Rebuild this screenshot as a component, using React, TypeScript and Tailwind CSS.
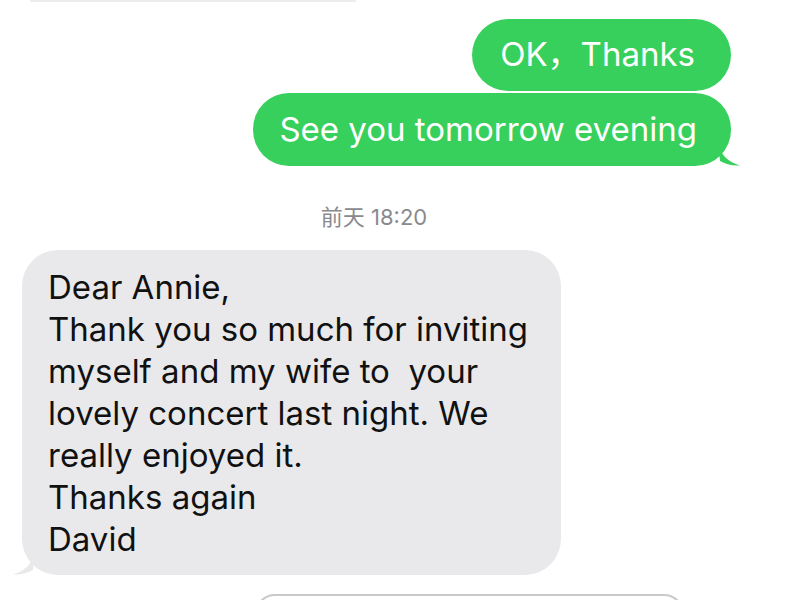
import React from "react";

const font = { fontFamily: '"Inter", "Noto Sans CJK SC", sans-serif' };

export default function App() {
  return (
    <div className="w-[800px] h-[600px] bg-white overflow-hidden flex flex-col" style={font}>
      <div className="h-[2px] ml-[30px] w-[326px] bg-[#ececee] rounded-full shrink-0" />
      <div className="flex flex-col items-end pr-[69px] mt-[17px] gap-[2px]">
        <div className="h-[72px] rounded-[36px] bg-[#37d05c] text-white text-[33px] flex items-center pl-[28px] pr-[36px]">
          OK，Thanks
        </div>
        <div className="relative h-[73px] rounded-[36px] bg-[#37d05c] text-white text-[33px] flex items-center pl-[26px] pr-[34px]">
          See you tomorrow evening
          <svg className="absolute right-[-11px] bottom-0" width="24" height="22" viewBox="0 0 24 22">
            <path d="M0 0 C4 12 10 18 22 21.5 C14 22 7 20 2 17 Z" fill="#37d05c" />
          </svg>
        </div>
      </div>
      <div className="mt-[39px] text-center text-[22px] leading-[24px] text-[#8a8a8e] pr-[52px]">前天 18:20</div>
      <div className="mt-[21px] ml-[22px] relative w-[539px] rounded-[36px] bg-[#e9e9eb] text-[#111] text-[33px] leading-[42px] pt-[16px] pb-[15px] pl-[26px] whitespace-pre shrink-0">
        <div>Dear Annie,</div>
        <div>Thank you so much for inviting</div>
        <div>{"myself and my wife to  your"}</div>
        <div>lovely concert last night. We</div>
        <div>really enjoyed it.</div>
        <div>Thanks again</div>
        <div>David</div>
        <svg className="absolute left-[-11px] bottom-0" width="24" height="22" viewBox="0 0 24 22">
          <path d="M24 0 C20 12 14 18 2 21.5 C10 22 17 20 22 17 Z" fill="#e9e9eb" />
        </svg>
      </div>
      <div className="mt-[19px] ml-[255px] w-[429px] h-[40px] rounded-[20px] border-2 border-[#c9c9cc] shrink-0" />
    </div>
  );
}
